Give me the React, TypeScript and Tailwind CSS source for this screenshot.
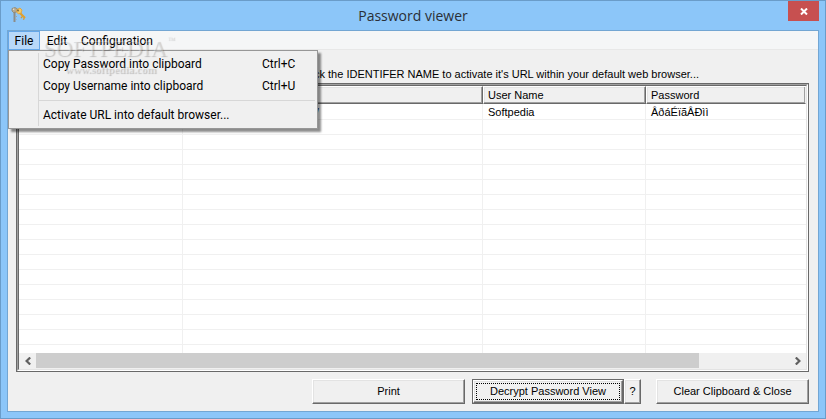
import { clsx } from "clsx";

const columns = [
  { name: "Identifier Name", width: "w-[164px]" },
  { name: "URL", width: "w-[300px]" },
  { name: "User Name", width: "w-[163px]" },
  { name: "Password", width: "" },
];

const entries = [["Softpedia", "https://www.softpedia.com/", "Softpedia", "ÂðáÉïãÂÐìì"]];

// Blank lines that fill the rest of the list view
const blankRows = Array.from({ length: 15 }, (_, i) => i);

// Classic 3D edge shared by the push buttons and the column headers
const raised =
  "border border-t-white border-l-white border-r-[#696969] border-b-[#696969] bg-[#f0f0f0] shadow-[inset_-1px_-1px_0_#a0a0a0,inset_1px_1px_0_#e3e3e3]";

const KeysIcon = () => (
  <svg width="16" height="16" viewBox="0 0 16 16" fill="none" aria-hidden="true">
    <path d="M4.5 5v10" stroke="#8c8c88" strokeWidth="2" />
    <path d="M5.5 9.5h1.5M5.5 12.5h1" stroke="#a9a59a" />
    <path d="M2 1.5L5 0.5L7.5 2L6.5 5L3.5 5.5L2 4z" fill="#b5aa93" stroke="#8f856f" strokeWidth="0.8" />
    <path d="M9.5 5.5L15 11" stroke="#e0a030" strokeWidth="2.2" />
    <path d="M12.2 9.5L11 11.2M14.3 11.3L13.3 12.6" stroke="#d9992a" strokeWidth="1.3" />
    <path d="M7 2.5L10 1L12 3L11.2 6L8.5 7L6.5 5z" fill="#f3c765" stroke="#dca03a" strokeWidth="0.8" />
    <circle cx="8" cy="3.4" r="1" fill="#7d6a45" />
    <circle cx="3.6" cy="2.3" r="0.8" fill="#e9e4d6" />
  </svg>
);

const TitleBar = () => (
  <header className="flex h-[29px] items-start">
    <div className="flex w-[52px] pt-[6px] pl-[3px]">
      <KeysIcon />
    </div>
    <h1 className="flex-1 pt-[5px] text-center font-['Open_Sans',sans-serif] text-[14px] leading-[20px] text-[#2a2f36]">
      Password viewer
    </h1>
    <div className="flex w-[52px] justify-end">
      <button aria-label="Close" className="flex h-[20px] w-[31px] items-center justify-center bg-[#c75050]">
        <svg width="8" height="7" viewBox="0 0 8 7" aria-hidden="true">
          <path d="M1 0.5L7 6.5M7 0.5L1 6.5" stroke="#fff" strokeWidth="2" />
        </svg>
      </button>
    </div>
  </header>
);

const MenuItem = ({ label, keys }: { label: string; keys?: string }) => (
  <li>
    <button className="flex h-[22px] w-full items-center pl-[34px] text-left">
      <span className="flex-1">{label}</span>
      {keys && <span className="w-[55px]">{keys}</span>}
    </button>
  </li>
);

const FileMenu = () => (
  <div className="absolute top-[19px] left-0 z-10 w-[310px] border border-[#979797] bg-[#f0f0f0] py-[2px] shadow-[3px_3px_2px_rgba(0,0,0,0.45)]">
    <div className="absolute top-[2px] bottom-[2px] left-[29px] w-px bg-[#d7d7d7]" />
    <ul>
      <MenuItem label="Copy Password into clipboard" keys="Ctrl+C" />
      <MenuItem label="Copy Username into clipboard" keys="Ctrl+U" />
      <li className="my-[3px] mr-[2px] ml-[30px] h-px bg-[#d7d7d7]" />
      <MenuItem label="Activate URL into default browser..." />
    </ul>
  </div>
);

const Watermark = () => (
  <div className="pointer-events-none absolute top-[5px] left-[35px] z-20 font-['Liberation_Serif',serif] text-white/30 [text-shadow:1px_1px_1px_rgba(0,0,0,0.2)]">
    <div className="flex items-start text-[23px] leading-[25px]">
      SOFTPEDIA
      <span className="text-[8px] leading-[8px]">™</span>
    </div>
    <div className="pl-[22px] text-[11px] leading-[16px] font-bold">www.softpedia.com</div>
  </div>
);

const MenuBar = () => (
  <nav className="relative flex h-[19px] border-b border-[#e8e8e8] bg-[#f5f6f7] font-['Roboto',sans-serif] text-[12px] leading-[18px] text-black">
    <button className="h-[19px] w-[32px] border border-[#66a7e8] bg-[#b8d8f9] leading-[18px]">File</button>
    <button className="h-[19px] w-[34px] text-center">Edit</button>
    <button className="h-[19px] px-[7px]">Configuration</button>
    <FileMenu />
    <Watermark />
  </nav>
);

const PasswordTable = () => (
  <table className="w-full table-fixed border-separate border-spacing-0 bg-white text-left">
    <thead>
      <tr className="h-[18px]">
        {columns.map((column) => (
          <th
            key={column.name}
            className={clsx(raised, "p-0 pl-[4px] font-normal last:border-r-[#f0f0f0]", column.width)}
          >
            {column.name}
          </th>
        ))}
      </tr>
    </thead>
    <tbody>
      {entries.map((entry) => (
        <tr key={entry[0]} className="h-[16px]">
          {entry.map((value, i) => (
            <td
              key={i}
              className="border-r border-b border-[#f0f0f0] p-0 pt-px pl-[5px] leading-[14px] last:border-r-0"
            >
              {value}
            </td>
          ))}
        </tr>
      ))}
      {blankRows.map((row) => (
        <tr key={row} className="h-[15px]">
          {columns.map((column) => (
            <td key={column.name} className="border-r border-b border-[#f0f0f0] p-0 last:border-r-0" />
          ))}
        </tr>
      ))}
      <tr className="h-[8px]">
        {columns.map((column) => (
          <td key={column.name} className="border-r border-[#f0f0f0] p-0 last:border-r-0" />
        ))}
      </tr>
    </tbody>
  </table>
);

const ScrollArrow = ({ d, label }: { d: string; label: string }) => (
  <button aria-label={label} className="flex h-[15px] w-[17px] items-center justify-center">
    <svg width="6" height="8" viewBox="0 0 6 8" fill="none" aria-hidden="true">
      <path d={d} stroke="#606060" strokeWidth="2.2" />
    </svg>
  </button>
);

const ScrollBar = () => (
  <div className="flex h-[16px] bg-[#f0f0f0]">
    <ScrollArrow label="Scroll left" d="M5.2 0.5L1.6 4L5.2 7.5" />
    <div className="flex-1">
      <div className="h-[15px] w-[88%] bg-[#cdcdcd]" />
    </div>
    <ScrollArrow label="Scroll right" d="M0.8 0.5L4.4 4L0.8 7.5" />
  </div>
);

const App = () => {
  return (
    <div className="min-h-screen border border-[#6a9cc9] bg-[#8cc6f9] px-[6px] pb-[6px] font-['Liberation_Sans',sans-serif] text-[11px] leading-[13px] text-black">
      <TitleBar />
      <main className="border border-[#73a6d3] bg-[#f0f0f0]">
        <MenuBar />
        <div className="pt-[18px] pr-[9px] pb-[7px] pl-[8px]">
          <p className="pr-[110px] pb-[2px] text-right">
            Double click the IDENTIFER NAME to activate it's URL within your default web browser...
          </p>
          <div className="border border-[#696969]">
            <div className="border border-t-[#a0a0a0] border-r-white border-b-white border-l-[#a0a0a0]">
              <div className="border border-t-[#696969] border-r-[#e3e3e3] border-b-[#e3e3e3] border-l-[#696969]">
                <PasswordTable />
                <ScrollBar />
              </div>
            </div>
          </div>
          <div className="mt-[7px] flex justify-end">
            <button className={clsx(raised, "mr-[7px] h-[25px] w-[153px]")}>Print</button>
            {/* Default button: dark outline and a focus rectangle */}
            <div className="flex h-[25px] w-[152px] border border-[#696969]">
              <button className={clsx(raised, "flex flex-1 p-[2px]")}>
                <span className="flex h-full flex-1 items-center justify-center border border-dotted border-black">
                  Decrypt Password View
                </span>
              </button>
            </div>
            <button className={clsx(raised, "mr-[15px] h-[25px] w-[17px]")}>?</button>
            <button className={clsx(raised, "h-[25px] w-[153px]")}>Clear Clipboard &amp; Close</button>
          </div>
        </div>
      </main>
    </div>
  );
};

export default App;
